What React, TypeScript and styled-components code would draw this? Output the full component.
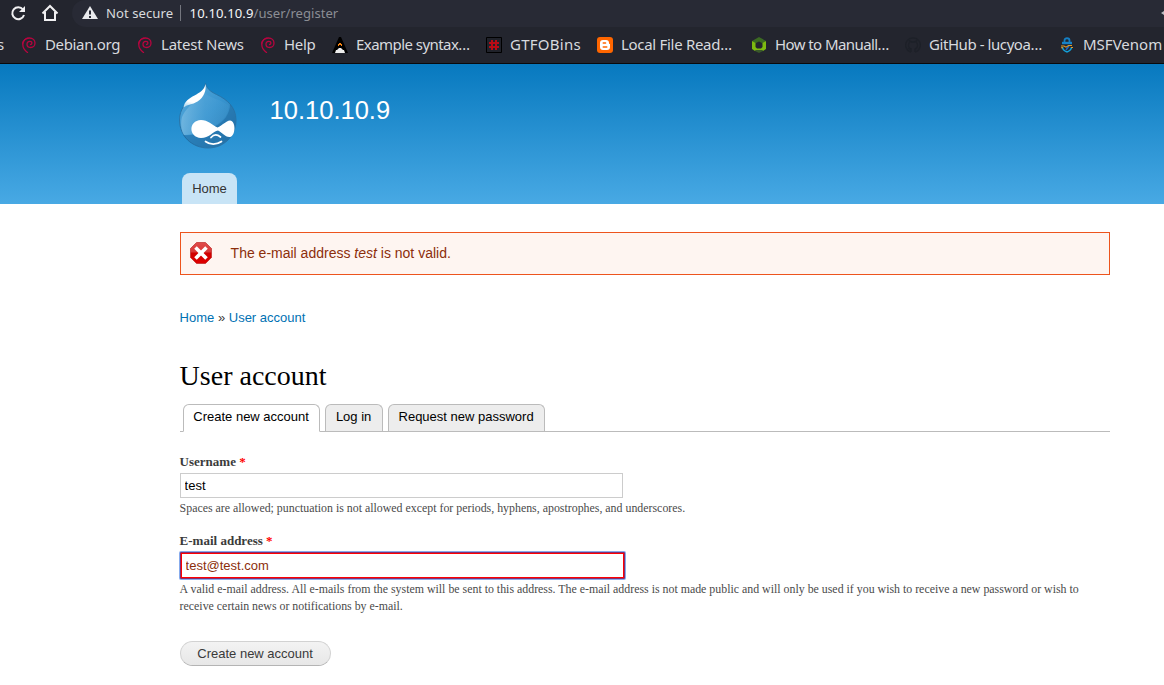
import React from "react";
import styled, { createGlobalStyle } from "styled-components";

const Global = createGlobalStyle`
  * { box-sizing: border-box; }
  body { margin: 0; background: #fff; font-family: "Liberation Sans", Arial, sans-serif; overflow: hidden; }
`;
const Page = styled.div`width: 1164px; height: 685px; overflow: hidden; background: #fff;`;
const Chrome = styled.div`
  height: 64px; background: #23252e; border-bottom: 1px solid #090a0d;
  font-family: "Noto Sans", sans-serif; color: #d8dade; overflow: hidden;
`;
const AddressRow = styled.div`display: flex; height: 27px;`;
const NavIcons = styled.div`
  display: flex; align-items: center; gap: 14px; width: 72px; padding: 0 0 1px 9px;
  svg { display: block; }
`;
const Omnibox = styled.div`
  flex: 1; display: flex; align-items: center; background: #282a35; border-radius: 13px 0 0 14px;
  padding: 0 0 1px 10px; font-size: 13.1px; line-height: 18px; white-space: pre;
`;
const Secure = styled.span`margin-left: 8px; width: 74px; color: #d8dade; letter-spacing: 0.05px;`;
const Divider = styled.span`width: 1px; height: 16px; background: #74767e; margin-right: 8.6px;`;
const Host = styled.span`color: #f4f5f7; letter-spacing: 0.1px;`;
const Path = styled.span`color: #8b8d94;`;
const Caret = styled.svg`margin-left: auto;`;
const Bookmarks = styled.div`
  display: flex; height: 36px; padding-bottom: 1px; align-items: center; white-space: nowrap; font-size: 15px; line-height: 20px;
`;
const Cut = styled.span`flex: none; width: 24px; margin-left: -3px; padding-bottom: 2px;`;
const Bookmark = styled.div<{ $w: number; $spacing: number }>`
  display: flex; align-items: center; width: ${(p) => p.$w}px; flex: none; letter-spacing: ${(p) => p.$spacing}px;
  svg { width: 16px; height: 16px; flex: none; margin-right: 8px; }
  span { padding-bottom: 2px; }
`;
const Header = styled.header`
  height: 140px; background: linear-gradient(#0779bf, #48a9e4); padding-left: 179px;
  display: flex; flex-direction: column;
`;
const Brand = styled.div`
  display: flex; height: 109px; padding-top: 19px;
`;
const SiteName = styled.div`margin: 12px 0 0 32.6px; color: #fff; font-size: 25.5px; line-height: 30px;`;
const MenuTab = styled.a`
  margin-left: 3px; width: 55px; height: 31px; border-radius: 8px 8px 0 0; background: #c8e4f6;
  color: #333; font-size: 13px; line-height: 31px; text-align: center;
`;
const Main = styled.main`width: 931px; margin-left: 179.6px; padding-top: 28px;`;
const ErrorBox = styled.div`
  width: 930px; height: 43px; border: 1px solid #ed541d; background: #fef5f1; color: #8c2e0b;
  display: flex; align-items: center; padding: 0 0 2px 9px; font-size: 14px;
  svg { margin-right: 19px; }
`;
const Breadcrumb = styled.nav`
  margin-top: 34px; font-size: 13px; line-height: 18px; color: #3b3b3b;
  a { color: #0071b3; }
`;
const Title = styled.h1`margin: 31px 0 0; font: 28px/36px "Liberation Serif", serif; color: #000;`;
const Tabs = styled.div`
  display: flex; gap: 5px; margin-top: 10px; width: 930px; height: 28px; padding-left: 3px; border-bottom: 1px solid #bbb;
`;
const Tab = styled.a<{ $w: number; $active?: boolean }>`
  width: ${(p) => p.$w}px; height: ${(p) => (p.$active ? 28 : 27)}px; border: 1px solid #bbb;
  border-bottom: ${(p) => (p.$active ? "1px solid #fff" : "0")};
  border-radius: 6px 6px 0 0; background: ${(p) => (p.$active ? "#fff" : "#ededed")};
  text-align: center; font-size: 13px; line-height: 24px; color: #000;
`;
const Label = styled.label`
  display: block; font: bold 13px/17px "Liberation Serif", serif; color: #3b3b3b;
  span { color: #f00; }
`;
const Field = styled.div<{ $top: number }>`margin-top: ${(p) => p.$top}px;`;
const Input = styled.input<{ $error?: boolean }>`
  display: block; margin: 3px 0 0; width: ${(p) => (p.$error ? 445 : 443)}px; height: ${(p) => (p.$error ? 27 : 25)}px;
  border: ${(p) => (p.$error ? "2px solid #f00" : "1px solid #ccc")};
  outline: ${(p) => (p.$error ? "2px solid rgba(16,90,220,.5)" : "none")}; outline-offset: -1px;
  border-radius: ${(p) => (p.$error ? 1 : 0)}px; padding: 0 4px;
  color: ${(p) => (p.$error ? "#8c2e0b" : "#000")}; font: 13px "Liberation Sans", sans-serif; background: #fff;
`;
const Help = styled.div`margin-top: 2px; font: 11.89px/17px "Liberation Serif", serif; color: #4a4a4a; width: 915px;`;
const Submit = styled.button`
  display: block; margin-top: 26px; width: 151px; height: 25px; padding: 0; border: 1px solid #d2d2d2; border-bottom-color: #b4b4b4;
  border-radius: 13px; background: linear-gradient(#f3f3f3, #e7e7e7); color: #3a3a3a; font: 13px "Liberation Sans", sans-serif;
`;

const Swirl = () => (
  <svg viewBox="0 0 16 16" fill="none" stroke="#b8053f" strokeLinecap="round">
    <path strokeWidth="1.300" d="M6.500 15.500C3.800 13.500 1.800 11 1.800 7.500 1.800 3.500 4.800 1 8.300 1c3.500 0 5.700 2.200 5.700 5 0 2.600-1.900 4.500-4.300 4.500-2 0-3.700-1.300-3.700-3.200C6 5.500 7.300 4.300 8.800 4.300c1.300 0 2.100.8 2.100 1.800 0 .8-.5 1.400-1.300 1.400" />
    <path strokeWidth=".9" d="M1.500 7C1.500 4 3.500 1.300 7 1" />
  </svg>
);
const Rocket = () => (
  <svg viewBox="0 0 16 16"><path fill="#000" d="M7 0h2l7 16H0z" /><path fill="#f58212" d="M7 6h2v1h1v2H9V8H7v1H6V7h1z" /><path fill="#eee" d="M7 11h2l2 2h1l1 3H3l1-3h1z" /></svg>
);
const Hash = () => (
  <svg viewBox="0 0 16 16"><path fill="#20222a" stroke="#000" d="M.5.5h15v15H.5z" /><path stroke="#b80b15" strokeWidth="2" fill="none" d="M6 3v10M10 3v10M3 6h10M3 10h10" /></svg>
);
const Blogger = () => (
  <svg viewBox="0 0 16 16"><rect width="16" height="16" rx="3" fill="#ff6600" /><path fill="#fff" d="M6 3h3c2 0 3 1.200 3 3 0 .8.300 1 1 1v3c0 2-1 3-3 3H6c-2 0-3-1-3-3V6c0-2 1-3 3-3z" /><path stroke="#ff6600" strokeWidth="1.400" strokeLinecap="round" d="M6.200 6h2.400M6.200 10h3.600" /></svg>
);
const Cube = () => (
  <svg viewBox="0 0 16 16"><path fill="#3b6a22" d="m8 0 7 4-3 2.500-4-2-4 2L1 4z" /><path fill="#7dbb10" d="m1 4 3.500 2v4L6 11.500h4l1.500-1.500V6L15 4v8l-3 2-1.500-1h-5L4 14l-3-2z" /><path fill="#39582a" d="M5 13h6l1 1-4 2-4-2z" /></svg>
);
const GitMark = () => (
  <svg viewBox="0 0 16 16"><path fill="none" stroke="#1d2028" strokeWidth="1.400" d="M6 15.200A7.300 7.300 0 1 1 10 15.200M6 15v-3c-1 .4-2 0-2.500-1M10 15v-3c3-.5 3-5 1.500-6.500V4L9.500 5h-3l-2-1v1.500C3 7 3 11.500 6 12" /></svg>
);
const Lock = () => (
  <svg viewBox="0 0 16 16" fill="none"><path stroke="#147fc4" strokeWidth="1.800" d="M5.500 5V3.500c0-3 5-3 5 0V5" /><path stroke="#1782c8" strokeWidth="2.400" d="M3 6h10" /><path stroke="#13a0d8" strokeWidth="1.500" d="M3.500 10c0 2 2 4 4.500 5M12.500 10c0 2-2 4-4.500 5" /><path stroke="#1c6ac9" strokeWidth="1.400" d="m7 13 3-4" /><path stroke="#e39a27" strokeWidth="1.100" d="M2 9h3l2 1.200L9.500 8.500H13M2 10.800h2M12 10.500h2" /></svg>
);

const bookmarks: { text: string; w: number; spacing: number; icon: React.ReactNode }[] = [
  { text: "Debian.org", w: 116, spacing: -0.35, icon: <Swirl /> },
  { text: "Latest News", w: 123, spacing: -0.22, icon: <Swirl /> },
  { text: "Help", w: 72, spacing: -0.3, icon: <Swirl /> },
  { text: "Example syntax…", w: 154, spacing: -0.55, icon: <Rocket /> },
  { text: "GTFOBins", w: 111, spacing: 0.25, icon: <Hash /> },
  { text: "Local File Read…", w: 154, spacing: -0.3, icon: <Blogger /> },
  { text: "How to Manuall…", w: 154, spacing: -0.58, icon: <Cube /> },
  { text: "GitHub - lucyoa…", w: 154, spacing: -0.43, icon: <GitMark /> },
  { text: "MSFVenom", w: 150, spacing: 0, icon: <Lock /> },
];

const Drop = () => (
  <svg width="58" height="66" viewBox="0 0 58 66">
    <defs>
      <linearGradient id="drop" x1="0" y1="0" x2="1" y2="1"><stop stopColor="#5cacdc" /><stop offset=".5" stopColor="#3794cf" /><stop offset="1" stopColor="#2b78ae" /></linearGradient>
      <linearGradient id="glow" x1="0" x2="1"><stop stopColor="#8ac4e6" stopOpacity=".6" /><stop offset=".5" stopColor="#57a7da" stopOpacity=".4" /><stop offset="1" stopColor="#57a7da" stopOpacity=".1" /></linearGradient>
      <linearGradient id="shine" x1=".7" y1="0" x2=".45" y2="1"><stop stopColor="#fff" /><stop offset=".8" stopColor="#fff" /><stop offset="1" stopColor="#b9dcf0" /></linearGradient>
    </defs>
    <path fill="url(#drop)" stroke="#286f9f" strokeWidth=".8" d="M26.500.5c1.500 5 4.500 8 11 11C48 16.500 57 24 57 37 57 53 45 65 29 65S.5 53 .5 37C.5 26 7 19 16 13c6-3.500 9.500-6.500 10.500-12.500z" />
    <path fill="#175f96" opacity=".4" d="M51 21c0 10-6 18-16 23-9 6-20 9-31 8 5 8 14 12.500 25 12.500 16 0 27.500-11.500 27.500-27.500 0-6.500-2-11.500-5.500-16z" />
    <path fill="url(#glow)" d="M3 34c3-7 9-13 23-24 4 5 18 7 24 13-1 10-7 16-15 20-9 5-18 9-30 9-3-5-3.500-12-2-18z" />
    <path fill="url(#shine)" d="M26.500 1c.8 6-1 13-8 17.500C13 22 9 21 4.500 24.500 5.500 18 10 15.500 15.500 12.500c5-3 10-5.500 11-11.500z" />
    <path fill="#fff" d="M22 37c7 0 11 5 16.500 7.500C43 42.500 47 38 51 37.500c6 0 6 15.500 0 16.500-5 .5-8-5-12-6.500-5 1-9 7.500-17 7.500-12.500-.5-13-17.500 0-18z" />
    <path fill="none" stroke="#fff" strokeWidth="1.700" strokeLinecap="round" d="M32 54.500c3-3.500 6-3.500 9.500-.5M26.500 58.500c4.500 3.500 11 3.500 16 0" />
  </svg>
);

export default function App() {
  return (
    <Page>
      <Global />
      <Chrome>
        <AddressRow>
          <NavIcons>
            <svg width="18" height="18" viewBox="0 0 18 18" fill="none" stroke="#f0f0f2" strokeWidth="2"><path d="M14 5.500A6 6 0 1 0 15 11" /><path fill="#f0f0f2" stroke="none" d="M16 2v6h-6z" /></svg>
            <svg width="18" height="18" viewBox="0 0 18 18" fill="none" stroke="#f0f0f2" strokeWidth="2"><path d="M1.500 9.500 9 2l7.500 7.500M4 8v8h10V8" /></svg>
          </NavIcons>
          <Omnibox>
            <svg width="16" height="14" viewBox="0 0 16 14"><path fill="#e9eaed" d="M8 0 16 13H0z" /><path stroke="#282a35" strokeWidth="2" d="M8 4.500v4M8 10v2" /></svg>
            <Secure>Not secure</Secure><Divider /><Host>10.10.10.9</Host><Path>/user/register</Path>
            <Caret width="3" height="4" viewBox="0 0 3 4"><path fill="#bbbcc1" d="M3 0v4L0 2z" /></Caret>
          </Omnibox>
        </AddressRow>
        <Bookmarks>
          <Cut>s</Cut>
          {bookmarks.map((b) => <Bookmark key={b.text} $w={b.w} $spacing={b.spacing}>{b.icon}<span>{b.text}</span></Bookmark>)}
        </Bookmarks>
      </Chrome>
      <Header>
        <Brand><Drop /><SiteName>10.10.10.9</SiteName></Brand>
        <MenuTab>Home</MenuTab>
      </Header>
      <Main>
        <ErrorBox>
          <svg width="22" height="22" viewBox="0 0 22 22">
            <defs><linearGradient id="stop" x2="0" y2="1"><stop stopColor="#df4b4b" /><stop offset=".45" stopColor="#d93838" /><stop offset=".5" stopColor="#cf0000" /><stop offset="1" stopColor="#df0000" /></linearGradient></defs>
            <path fill="url(#stop)" stroke="#b61818" strokeWidth=".6" d="M6.500.5h9l6 6v9l-6 6h-9l-6-6v-9z" />
            <path stroke="#fff" strokeWidth="3.600" d="m5.500 5.500 11 11M16.500 5.500l-11 11" />
          </svg>
          <span>The e-mail address <em>test</em> is not valid.</span>
        </ErrorBox>
        <Breadcrumb><a>Home</a> » <a>User account</a></Breadcrumb>
        <Title>User account</Title>
        <Tabs><Tab $w={137} $active>Create new account</Tab><Tab $w={58}>Log in</Tab><Tab $w={157}>Request new password</Tab></Tabs>
        <Field $top={21}>
          <Label>Username <span>*</span></Label>
          <Input defaultValue="test" />
          <Help>Spaces are allowed; punctuation is not allowed except for periods, hyphens, apostrophes, and underscores.</Help>
        </Field>
        <Field $top={15}>
          <Label>E-mail address <span>*</span></Label>
          <Input $error defaultValue="test@test.com" />
          <Help>A valid e-mail address. All e-mails from the system will be sent to this address. The e-mail address is not made public and will only be used if you wish to receive a new password or wish to receive certain news or notifications by e-mail.</Help>
        </Field>
        <Submit>Create new account</Submit>
      </Main>
    </Page>
  );
}
